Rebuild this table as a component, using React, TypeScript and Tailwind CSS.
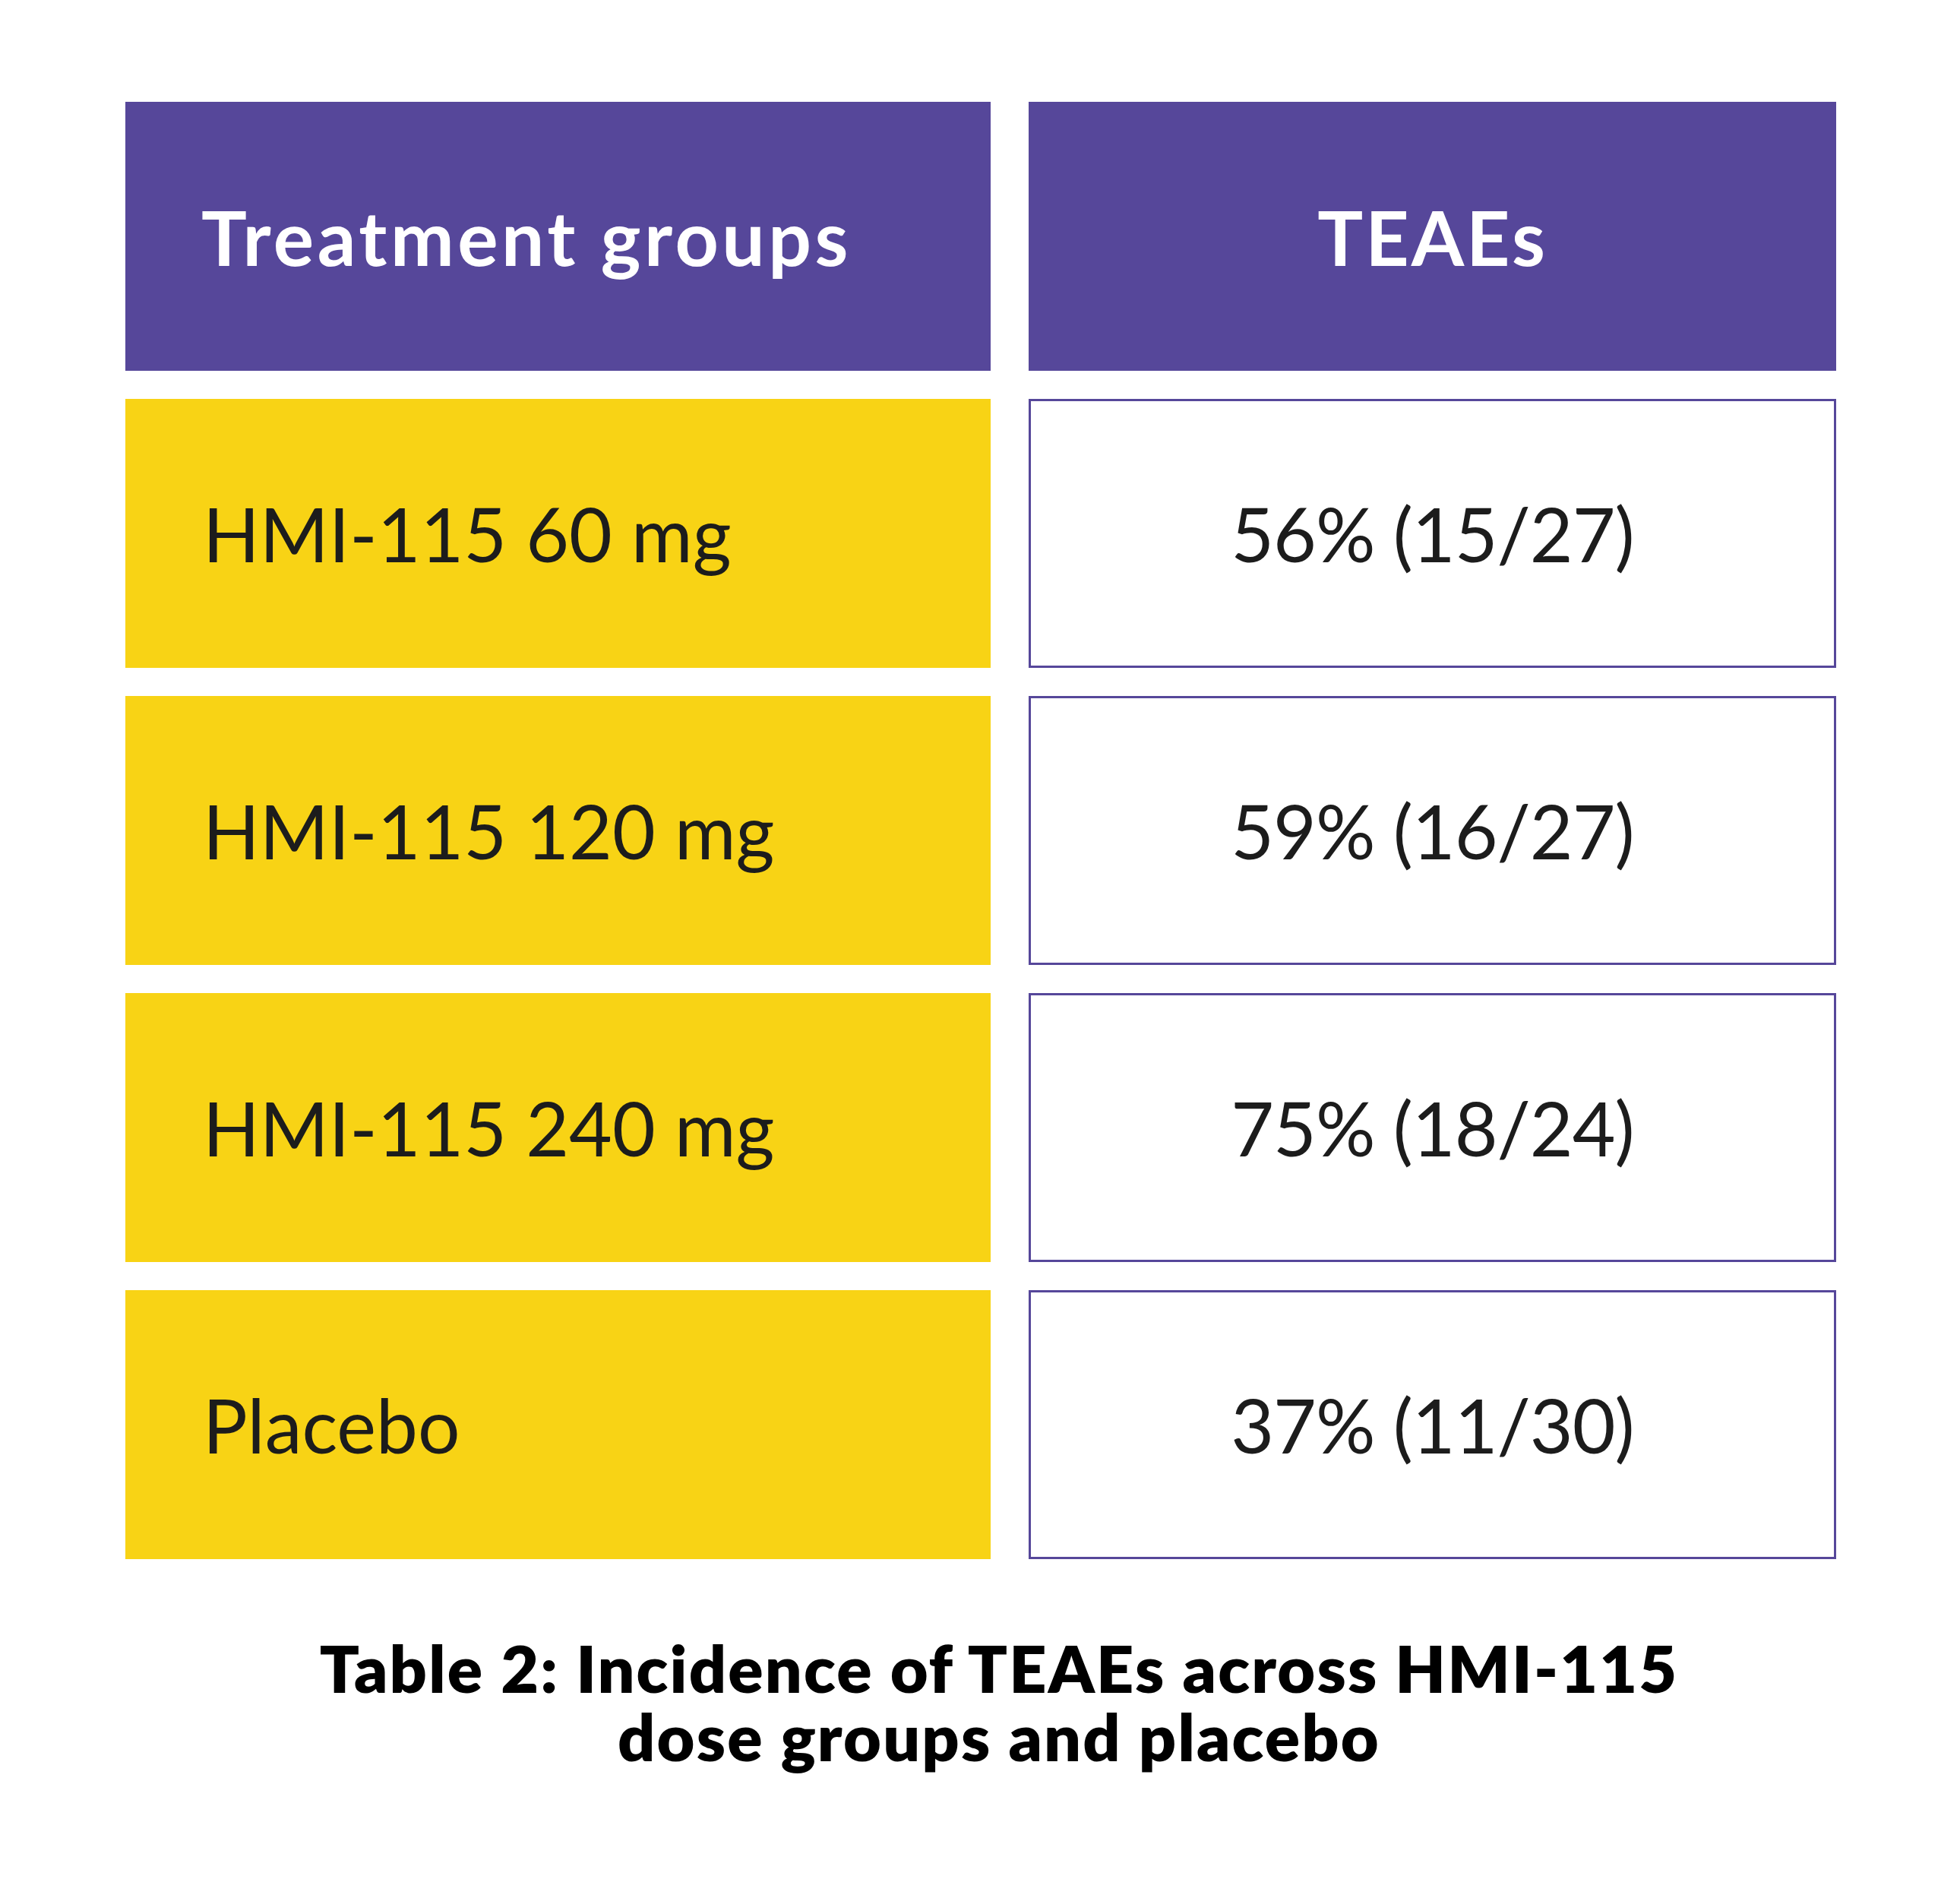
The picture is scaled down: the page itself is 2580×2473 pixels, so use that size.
const rows = [
  { group: "HMI-115 60 mg", teae: "56% (15/27)" },
  { group: "HMI-115 120 mg", teae: "59% (16/27)" },
  { group: "HMI-115 240 mg", teae: "75% (18/24)" },
  { group: "Placebo", teae: "37% (11/30)" },
];

export default function App() {
  return (
    <div
      className="min-h-[2473px] w-[2580px] bg-white pt-[134px]"
      style={{ fontFamily: "Lato, 'Open Sans', sans-serif" }}
    >
      {/* table */}
      <div className="ml-[165px] grid w-[2252px] grid-cols-[1139px_1063px] gap-x-[50px] gap-y-[37px]">
        <div className="flex h-[354px] items-center bg-[#56479a] pl-[100px] text-[100px] font-bold tracking-[0.045em] text-white">
          Treatment groups
        </div>
        <div className="flex h-[354px] items-center justify-center bg-[#56479a] text-[100px] font-bold tracking-[0.03em] text-white">
          TEAEs
        </div>
        {rows.map((r) => (
          <>
            <div
              key={r.group}
              className="flex h-[354px] items-center bg-[#f8d315] pl-[102px] text-[98px] text-[#1c1c1c]"
            >
              {r.group}
            </div>
            <div
              key={r.teae}
              className="flex h-[354px] items-center justify-center border-[3px] border-[#56479a] bg-white text-[98px] tracking-[-0.01em] text-[#1c1c1c]"
            >
              {r.teae}
            </div>
          </>
        ))}
      </div>

      {/* caption */}
      <div className="mt-[98px] flex flex-col items-center pl-[50px] text-[86px] font-extrabold tracking-[0.025em] text-black">
        <p className="h-[90px] leading-[90px]">Table 2: Incidence of TEAEs across HMI-115</p>
        <p className="h-[90px] leading-[90px]">dose groups and placebo</p>
      </div>
    </div>
  );
}
